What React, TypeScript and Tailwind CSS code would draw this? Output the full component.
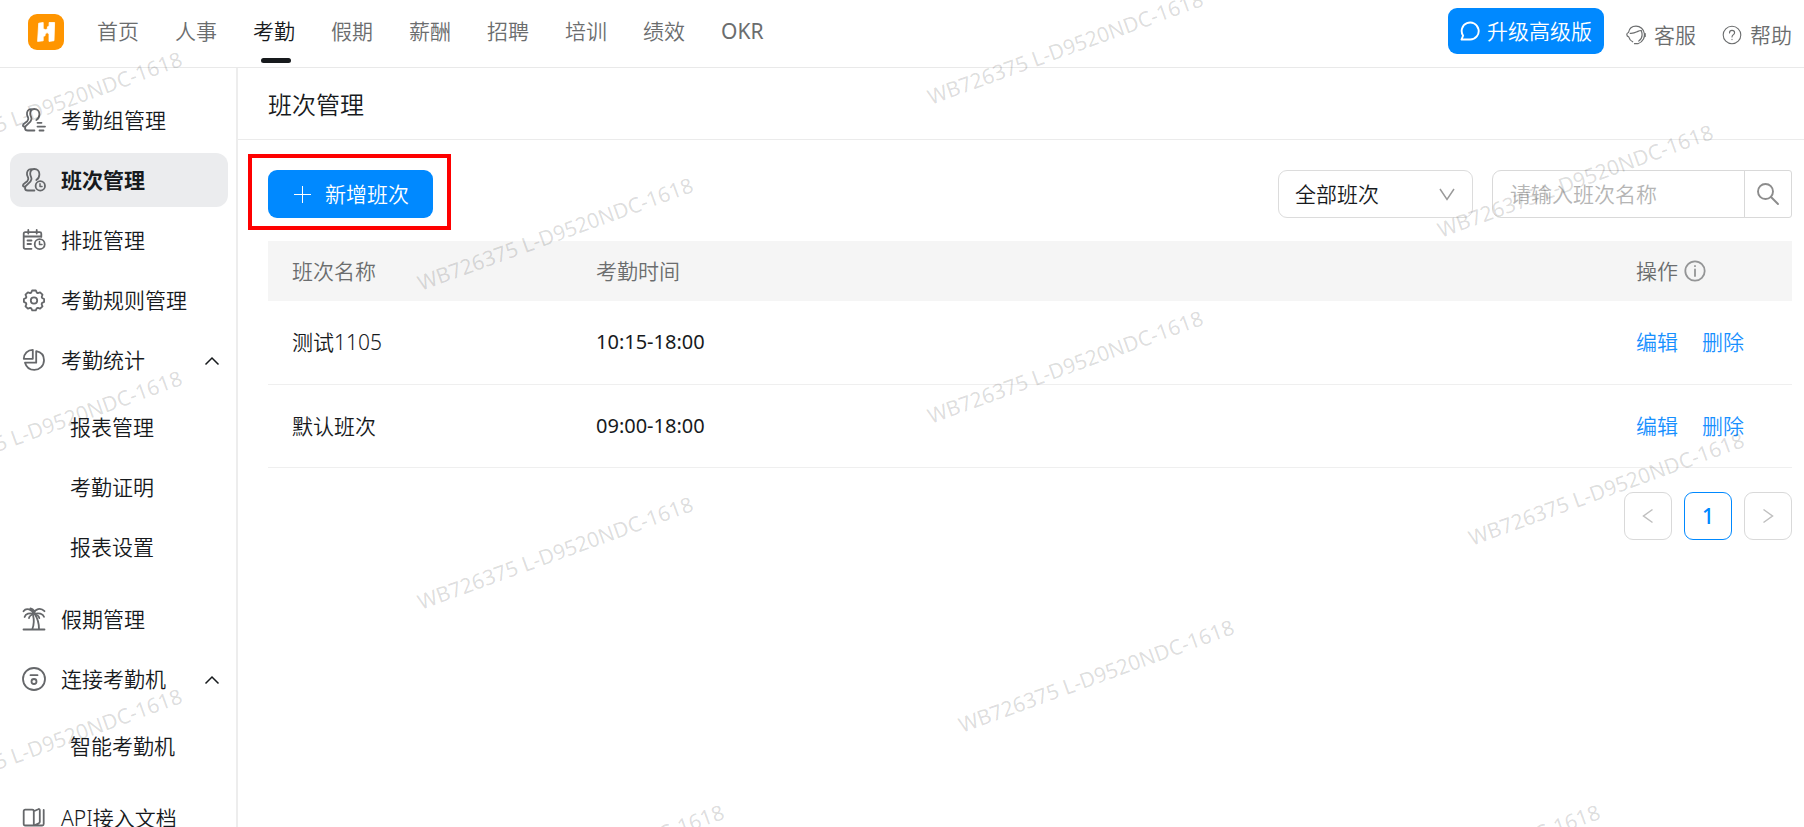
import React from 'react';

type IconProps = { className?: string };

function Svg({ className = 'size-6', children, viewBox = '0 0 24 24' }: IconProps & { children: React.ReactNode; viewBox?: string }) {
  return (
    <svg className={className} viewBox={viewBox} fill="none" stroke="currentColor" strokeWidth={1.8} strokeLinecap="round" strokeLinejoin="round" aria-hidden="true">
      {children}
    </svg>
  );
}

function PersonShape() {
  return (
    <>
      <path d="M9.200 1.200C6 1.300 4.700 3.600 5 6.300c.2 2 1.500 3.200 1.300 4.800-.3 1.800-1.400 2.700-3.300 3.800-1.300.8-2.100 1.600-2.100 2.600 0 1 .9 1.300 2 1" />
      <path d="M14.300 12c1.700-1 3.100-3.400 3.100-5.800C17.400 3 15.200 1 12.400 1 9.600 1 8.200 2.900 8.200 5.700c0 2.500 1.500 3.500 1.300 5.500-.2 2-1.600 3.300-3.600 4.700-1.800 1.300-2.900 2.400-2.900 4 0 1.900 1 2.600 2.900 2.600h6.500" />
    </>
  );
}

function GroupIcon() {
  return (
    <Svg>
      <PersonShape />
      <path d="M15.500 14.800h4M15.500 18.600h7.500M17.500 22.500h4" />
    </Svg>
  );
}

function ShiftIcon() {
  return (
    <Svg>
      <PersonShape />
      <circle cx="18.300" cy="17.900" r="4.700" />
      <path d="M18 15.800v2.600h2" strokeWidth={1.500} />
    </Svg>
  );
}

function CalendarIcon() {
  return (
    <Svg>
      <path d="M9.500 20.800H3.200c-1 0-1.500-.5-1.500-1.500V5.700c0-1 .5-1.500 1.500-1.500h14.600c1 0 1.500.5 1.500 1.500v3.200M1.700 8.500h17.600M6.300 2v3.600M14.700 2v3.600M5.500 12.500h4M5.500 16h3.500" />
      <circle cx="17.700" cy="16.200" r="5" />
      <path d="M17.500 13.600v3h2.500" strokeWidth={1.500} />
    </Svg>
  );
}

function GearIcon() {
  return (
    <Svg>
      <path d="M10.100 2.500h3.800l.9 2.100 1 .5 2.300-.8 2.400 2.400-.8 2.300.4 1 2 1v3l-2 .9-.5 1.200.9 2.200-2.400 2.400-2.200-.9-1.200.5-.9 2.100h-3.600l-.9-2.100-1.200-.5-2.200.9-2.400-2.400.9-2.200-.5-1.200-2-.9v-3l2-1 .5-1-.9-2.300 2.400-2.400 2.300.8 1-.5z" />
      <circle cx="12" cy="12.500" r="3.200" />
    </Svg>
  );
}

function PieIcon() {
  return (
    <Svg>
      <path d="M10.800 1.800v9H1.800c0-5 4-9 9-9z" />
      <path d="M14.200 3.200c4.500.9 7.800 4.200 7.800 9 0 5.500-4.400 9.700-9.700 9.700-4.600 0-8-2.800-9.300-7.200h11.200z" />
    </Svg>
  );
}

function PalmIcon() {
  return (
    <Svg>
      <path d="M1.500 22.500h21M10.300 22c1.800-4.500 1.800-9.500.8-13.500M17 22c0-5.500-1-10-4.300-15" />
      <path d="M12 6.500C10 3 4.500 0 1.500 4.200M11.500 6.800C7.800 5.600 3.500 6.600 2.600 10M11.500 7C9 8 7.200 9 7 11.200M12 6.500C12.800 2 18.500.2 22.500 4.200M12.500 6.800c4-1.200 8.500-.2 9.500 3M12.500 7c2.500.8 4.500 2 4.800 4.200M8.500 1.300c1.500.2 2.800 1.200 3.500 2.500" />
    </Svg>
  );
}

function MachineIcon() {
  return (
    <Svg>
      <circle cx="12" cy="12" r="11" />
      <path d="M8.500 8.200h7" />
      <circle cx="12" cy="14.500" r="2.500" />
    </Svg>
  );
}

function BookIcon() {
  return (
    <Svg>
      <path d="M11.800 19.500H3.200c-1 0-1.500-.5-1.500-1.500V5.200c0-1 .5-1.500 1.500-1.500h7.100c1 0 1.500.5 1.500 1.500zM11.800 19.500l5-2.300c.7-.3 1-.7 1-1.500V4.200c0-1-.6-1.500-1.600-1l-4.400 2M21.700 4v14c0 1-.5 1.500-1.500 1.500h-8.400" />
    </Svg>
  );
}

function BrandLogo() {
  return (
    <svg className="size-9" viewBox="0 0 36 36" role="img" aria-label="HR">
      <rect width="36" height="36" rx="9" fill="#ff9500" />
      <path
        fill="#fff"
        stroke="#fff"
        strokeWidth="0.800"
        strokeLinejoin="round"
        d="M10.700 9.200 15.200 8.500v6.300l2.600 1 1.800-1.400-.3-1.500 1.800-.8V8.500h5.500l-.6 18.200-5 .7v-7.600l-2-1.200-1.900 1.600v1.500l-1.900.8v4.300l-5.600.6z"
      />
    </svg>
  );
}

function Chevron({ d, className = 'size-4' }: { d: string; className?: string }) {
  return (
    <svg className={className} viewBox="0 0 16 16" fill="none" stroke="currentColor" strokeWidth={1.500} aria-hidden="true">
      <path d={d} />
    </svg>
  );
}

const topNav = ['首页', '人事', '考勤', '假期', '薪酬', '招聘', '培训', '绩效', 'OKR'];

type MenuEntry = { label: string; icon: () => React.ReactElement; active?: boolean; children?: string[] };

const menu: MenuEntry[] = [
  { label: '考勤组管理', icon: GroupIcon },
  { label: '班次管理', icon: ShiftIcon, active: true },
  { label: '排班管理', icon: CalendarIcon },
  { label: '考勤规则管理', icon: GearIcon },
  { label: '考勤统计', icon: PieIcon, children: ['报表管理', '考勤证明', '报表设置'] },
  { label: '假期管理', icon: PalmIcon },
  { label: '连接考勤机', icon: MachineIcon, children: ['智能考勤机'] },
  { label: 'API接入文档', icon: BookIcon },
];

const shifts = [
  { name: '测试1105', time: '10:15-18:00' },
  { name: '默认班次', time: '09:00-18:00' },
];

const watermarks = [
  { left: -90, top: 165 },
  { left: -90, top: 484 },
  { left: -90, top: 802 },
  { left: 421, top: 291 },
  { left: 421, top: 610 },
  { left: 452, top: 918 },
  { left: 931, top: 105 },
  { left: 931, top: 424 },
  { left: 962, top: 733 },
  { left: 1441, top: 238 },
  { left: 1472, top: 546 },
  { left: 1328, top: 918 },
];

function Header() {
  return (
    <header className="flex h-[68px] shrink-0 items-stretch border-b border-[#e9e9e9] pr-3 pl-7">
      <a href="#home" className="mr-[33px] flex items-center pb-1">
        <BrandLogo />
      </a>
      <nav className="flex gap-9 text-[#6b6d6e]">
        {topNav.map((label) => (
          <a
            key={label}
            href={'#' + label}
            className={'relative flex items-center pb-[5px] ' + (label === '考勤' ? 'text-[#171a1d]' : label === 'OKR' ? 'font-normal' : '')}
          >
            {label}
            {label === '考勤' && <span className="absolute right-[4px] bottom-[4px] left-[8px] h-[5px] rounded-full bg-[#171a1d]" />}
          </a>
        ))}
      </nav>
      <div className="ml-auto flex items-start gap-[26px] pt-2 text-[#6b6d6e]">
        <button type="button" className="-mr-1 flex h-[46px] items-center gap-[7px] rounded-[9px] bg-[#0089ff] px-3 text-white">
          <Svg className="size-5" viewBox="0 0 20 20">
            <path strokeWidth={1.900} d="M1.500 18.500h8.700a8.500 8.500 0 1 0-7.100-3.800z" />
          </Svg>
          升级高级版
        </button>
        <a href="#service" className="mt-1 flex h-[46px] items-center gap-2">
          <Svg className="size-5" viewBox="0 0 20 20">
            <path strokeWidth={1.200} d="M2.500 7.500C3.200 3.700 6.200 1.100 10 1.100c4.300 0 7.900 3.200 8.400 7.600.2 2-.1 3.700-.9 5.300-1.200 2.300-3 3.900-5.600 4.700M2.500 7.500C1.300 7.800.8 8.600.8 9.600c0 1.200.7 2 1.900 2.200M4.200 8.300c2.800.2 5-.6 6.800-1.500 1.500-.7 2.500-1.500 4.300-1.300.5 1.500.9 3 .8 4.600-.1 2.600-1.300 4.800-3.300 6M2.700 11.800c.7 2.400 2 4 4 5M19.200 8.500v3M8.500 18.700h3" />
          </Svg>
          客服
        </a>
        <a href="#help" className="mt-1 flex h-[46px] items-center gap-2">
          <Svg className="size-5" viewBox="0 0 20 20">
            <circle strokeWidth={1.100} cx="10" cy="10" r="8.800" />
            <path strokeWidth={1.100} d="M7.500 8c0-1.600 1-2.600 2.500-2.600s2.600.9 2.600 2.300c0 1.900-2.600 2-2.600 4.300M10 14.200v.4" />
          </Svg>
          帮助
        </a>
      </div>
    </header>
  );
}

function Sidebar() {
  return (
    <aside className="w-[238px] shrink-0 border-r-2 border-[#ededed] pt-[25px] pr-2 pl-[10px] text-[#171a1d]">
      <ul className="flex flex-col gap-[6px]">
        {menu.map((item) => {
          const Icon = item.icon;
          return (
            <li key={item.label}>
              <a
                href={'#' + item.label}
                className={'flex h-[54px] items-center gap-[15px] rounded-xl pr-2 pl-3 ' + (item.active ? 'bg-[#ebecee] font-bold' : '')}
              >
                <span className="text-[#65676a]">
                  <Icon />
                </span>
                {item.label}
                {item.children && <Chevron d="M1.500 12.500 8 6l6.500 6.500" className="ml-auto size-4 shrink-0" />}
              </a>
              {item.children && (
                <ul className="flex flex-col gap-[6px] pt-[13px] pb-3">
                  {item.children.map((child) => (
                    <li key={child}>
                      <a href={'#' + child} className="flex h-[54px] items-center pl-[60px]">
                        {child}
                      </a>
                    </li>
                  ))}
                </ul>
              )}
            </li>
          );
        })}
      </ul>
    </aside>
  );
}

function Toolbar() {
  return (
    <div className="flex items-center gap-[19px]">
      <div className="relative mr-auto">
        <button type="button" className="flex h-12 items-center gap-3 rounded-[9px] bg-[#0089ff] px-6 text-white">
          <svg className="size-[21px]" viewBox="0 0 21 21" stroke="currentColor" aria-hidden="true">
            <path d="M2 10.500h17M10.500 2v17" />
          </svg>
          新增班次
        </button>
        <span className="pointer-events-none absolute -top-4 -right-[18px] -bottom-3 -left-5 border-4 border-[#fe0000]" />
      </div>
      <div className="relative text-[#171a1d]">
        <select aria-label="班次筛选" className="h-12 w-[195px] appearance-none rounded-[9px] border border-[#dcdcdc] bg-white pl-4">
          <option>全部班次</option>
        </select>
        <span className="pointer-events-none absolute inset-y-0 right-[18px] flex items-center text-[#9a9a9a]">
          <Chevron d="M1 3 8 13.500 15 3" />
        </span>
      </div>
      <div className="flex h-12 w-[300px]">
        <input
          aria-label="班次名称"
          placeholder="请输入班次名称"
          className="min-w-0 flex-1 rounded-l-[9px] border border-[#d9d9d9] pl-[17px] outline-none placeholder:text-[#b5b5b5]"
        />
        <button type="button" aria-label="搜索" className="-ml-px flex w-12 items-center justify-center rounded-r-[3px] border border-[#d9d9d9] text-[#8c8c8c]">
          <Svg>
            <circle cx="9.500" cy="9.500" r="7.500" strokeWidth={1.900} />
            <path d="m15 15 7 7" strokeWidth={1.900} />
          </Svg>
        </button>
      </div>
    </div>
  );
}

function ShiftTable() {
  return (
    <table className="mt-[23px] w-full table-fixed border-collapse text-left">
      <colgroup>
        <col className="w-[304px]" />
        <col />
        <col className="w-[180px]" />
      </colgroup>
      <thead>
        <tr className="h-[60px] bg-[#f5f5f5] text-[#6b6d6e]">
          <th className="px-6 font-[350]">班次名称</th>
          <th className="px-6 font-[350]">考勤时间</th>
          <th className="px-6 font-[350]">
            <span className="flex items-center gap-[6px]">
              操作
              <Svg className="size-[22px] text-[#949596]" viewBox="0 0 22 22">
                <circle cx="11" cy="11" r="9.700" />
                <path d="M11 9.500V16M11 5.900v.3" />
              </Svg>
            </span>
          </th>
        </tr>
      </thead>
      <tbody>
        {shifts.map((shift) => (
          <tr key={shift.name} className="h-[83px] border-b border-[#efefef] text-[#171a1d]">
            <td className="px-6">{shift.name}</td>
            <td className="px-6 text-[20px] font-normal">{shift.time}</td>
            <td className="px-6">
              <span className="flex gap-6 text-[#1890ff]">
                <a href="#edit">编辑</a>
                <a href="#delete">删除</a>
              </span>
            </td>
          </tr>
        ))}
      </tbody>
    </table>
  );
}

function Pagination() {
  const box = 'flex size-12 items-center justify-center rounded-[9px] border';
  return (
    <nav aria-label="分页" className="mt-6 flex justify-end gap-3">
      <button type="button" aria-label="上一页" className={box + ' border-[#d9d9d9] text-[#bfbfbf]'}>
        <Chevron d="M12.500 1.500 3.500 8l9 6.500" />
      </button>
      <button type="button" className={box + ' border-[#0089ff] font-medium text-[#0089ff]'}>
        1
      </button>
      <button type="button" aria-label="下一页" className={box + ' border-[#d9d9d9] text-[#bfbfbf]'}>
        <Chevron d="m3.500 1.500 9 6.500-9 6.500" />
      </button>
    </nav>
  );
}

function Watermark() {
  return (
    <div aria-hidden="true" className="pointer-events-none absolute inset-0 overflow-hidden">
      {watermarks.map((mark) => (
        <span
          key={mark.left + '-' + mark.top}
          className="absolute origin-bottom-left -translate-y-full -rotate-20 font-['Noto_Sans'] text-[21px] leading-[15px] font-normal whitespace-nowrap text-black/14"
          style={{ left: mark.left, top: mark.top }}
        >
          WB726375 L-D9520NDC-1618
        </span>
      ))}
    </div>
  );
}

export default function App() {
  return (
    <div className="relative flex h-screen flex-col overflow-hidden bg-white font-['Noto_Sans','Noto_Sans_CJK_SC',sans-serif] text-[21px] leading-[30px] font-[350]">
      <Header />
      <div className="flex min-h-0 flex-1">
        <Sidebar />
        <main className="min-w-0 flex-1">
          <div className="flex h-[72px] items-center border-b border-[#ebebeb] pt-[2px] pl-[30px]">
            <h1 className="text-[24px] text-[#171a1d]">班次管理</h1>
          </div>
          <div className="pt-[30px] pr-3 pl-[30px]">
            <Toolbar />
            <ShiftTable />
            <Pagination />
          </div>
        </main>
      </div>
      <Watermark />
    </div>
  );
}
